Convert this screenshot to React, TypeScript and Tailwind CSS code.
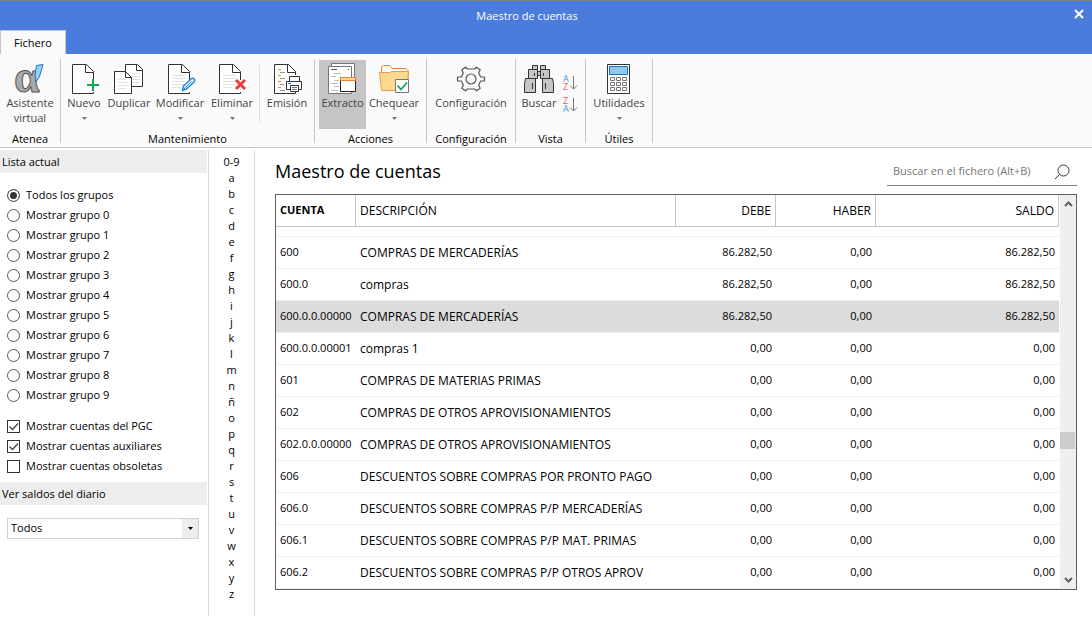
import { useState } from 'react';
import type { ReactNode } from 'react';

const LETTERS = ['0-9', ...'abcdefghijklmnñopqrstuvwxyz'.split('')];

const GROUPS = ['Todos los grupos', ...Array.from({ length: 10 }, (_, i) => `Mostrar grupo ${i}`)];

const ACCOUNTS = [
  { code: '600', name: 'COMPRAS DE MERCADERÍAS', debit: '86.282,50', credit: '0,00', balance: '86.282,50' },
  { code: '600.0', name: 'compras', debit: '86.282,50', credit: '0,00', balance: '86.282,50' },
  { code: '600.0.0.00000', name: 'COMPRAS DE MERCADERÍAS', debit: '86.282,50', credit: '0,00', balance: '86.282,50' },
  { code: '600.0.0.00001', name: 'compras 1', debit: '0,00', credit: '0,00', balance: '0,00' },
  { code: '601', name: 'COMPRAS DE MATERIAS PRIMAS', debit: '0,00', credit: '0,00', balance: '0,00' },
  { code: '602', name: 'COMPRAS DE OTROS APROVISIONAMIENTOS', debit: '0,00', credit: '0,00', balance: '0,00' },
  { code: '602.0.0.00000', name: 'COMPRAS DE OTROS APROVISIONAMIENTOS', debit: '0,00', credit: '0,00', balance: '0,00' },
  { code: '606', name: 'DESCUENTOS SOBRE COMPRAS POR PRONTO PAGO', debit: '0,00', credit: '0,00', balance: '0,00' },
  { code: '606.0', name: 'DESCUENTOS SOBRE COMPRAS P/P MERCADERÍAS', debit: '0,00', credit: '0,00', balance: '0,00' },
  { code: '606.1', name: 'DESCUENTOS SOBRE COMPRAS P/P MAT. PRIMAS', debit: '0,00', credit: '0,00', balance: '0,00' },
  { code: '606.2', name: 'DESCUENTOS SOBRE COMPRAS P/P OTROS APROV', debit: '0,00', credit: '0,00', balance: '0,00' },
];

// Icons
function Icon({ children }: { children: ReactNode }) {
  return (
    <svg viewBox="0 0 32 32" className="size-8 shrink-0 overflow-visible" fill="none" aria-hidden="true">
      {children}
    </svg>
  );
}

function Page({ x = 4, lines = false }: { x?: number; lines?: boolean }) {
  return (
    <g transform={`translate(${x} 0)`}>
      <path d="M.5 1.5h14l7 7v22H.5z" fill="#fff" />
      <path d="M21.5 17V8.5l-7-7H.5v29h21V29" stroke="#333" />
      <path d="M13.5 1.5v8h8" stroke="#333" />
      {lines && <path d="M4 12.5h13M4 15.5h13M4 18.5h13M4 21.5h12M4 24.5h9" stroke="#e2e2e2" />}
    </g>
  );
}

function AssistantIcon() {
  return (
    <Icon>
      <text x="0" y="29" fontSize="46" fontWeight="bold" fontFamily="Liberation Serif, serif" fill="#a9a9a9" stroke="#555" strokeWidth="1">
        α
      </text>
      <path d="M22.500 2.500l6.500-1-3.500 12-3.500 5.500-1-7z" fill="#9bd0f5" stroke="#1d72b8" />
    </Icon>
  );
}

function NewIcon() {
  return (
    <Icon>
      <Page />
      <path d="M25 16v12M19 22h12" stroke="#fafafa" strokeWidth="4" />
      <path d="M25 16v12M19 22h12" stroke="#13a650" strokeWidth="2" />
    </Icon>
  );
}

function DuplicateIcon() {
  return (
    <Icon>
      <path d="M12.500 1.500h12l5 5v17h-17z" fill="#fff" stroke="#333" />
      <path d="M23.500 1.500v6h6" stroke="#333" />
      <path d="M19 10.500h8M19 13.500h8M20 16.500h7M20 19.500h7" stroke="#e2e2e2" />
      <path d="M1.500 8.500h11l6 6v16h-17z" fill="#fff" stroke="#333" />
      <path d="M12.500 8.500v6h6" stroke="#333" />
      <path d="M5 16.500h8M5 19.500h10M5 22.500h10M5 25.500h8" stroke="#e2e2e2" />
    </Icon>
  );
}

function EditIcon() {
  return (
    <Icon>
      <Page lines />
      <path d="M18.500 27.500l1-4.500 8-7.500c2-1 4 1 3 3l-8 7.500z" fill="#eaf5fd" stroke="#2a8fd6" strokeWidth="1.500" />
      <path d="M20 26l7.500-7.500" stroke="#2a8fd6" />
    </Icon>
  );
}

function DeleteIcon() {
  return (
    <Icon>
      <Page x={3} lines />
      <path d="M20 17l9 9M29 17l-9 9" stroke="#ee3b3b" strokeWidth="3" />
    </Icon>
  );
}

function PrintIcon() {
  return (
    <Icon>
      <Page x={3} />
      <path d="M7 6.500h3M7 12.500h3M7 18.500h3M7 24.500h3" stroke="#e8952a" />
      <path d="M9 9.500h5M9 15.500h5M9 21.500h4M9 27.500h5" stroke="#999" />
      <path d="M15 12h17v17H15z" fill="#fafafa" />
      <path d="M18.500 18.500v-5h10v5" fill="#fff" stroke="#333" />
      <path d="M19.500 26.500h-4v-8h15v8h-4" fill="#fff" stroke="#333" />
      <path d="M19.500 22.500h8v6h-8z" fill="#fff" stroke="#333" />
      <path d="M21 24.500h5M21 26.500h5" stroke="#777" />
      <path d="M17 20.500h3" stroke="#2a8fd6" />
    </Icon>
  );
}

function StatementIcon() {
  return (
    <Icon>
      <path d="M4.500.500h23v26h-23z" fill="#fff" stroke="#777" />
      <path d="M1.500 3.500h23v27h-23z" fill="#fff" stroke="#777" />
      <path d="M4 6.500h6M21 6.500h1" stroke="#555" />
      <path d="M7 10.500h7M4 13.500h5M7 17.500h5M4 20.500h7M7 23.500h5M4 27.500h7" stroke="#bbb" />
      <path d="M13.500 14.500h15v14h-15z" fill="#fff" stroke="#222" />
      <path d="M13.500 14.500h15v3h-15z" fill="#fcd98c" stroke="#e8862d" />
    </Icon>
  );
}

function CheckIcon() {
  return (
    <Icon>
      <path d="M3.500 9V4l2-1.500h6l2.500 3h14l2 2V20h-26z" fill="#fff" stroke="#ed7d31" />
      <path d="M1.500 9.500h10l2-1h17l-2 19h-25z" fill="#fbd98e" stroke="#ed9a4c" />
      <path d="M17.500 16.500h13v13h-13z" fill="#fff" stroke="#777" />
      <path d="M19.500 22.500l3.500 4 6-7" stroke="#13a650" strokeWidth="1.800" />
    </Icon>
  );
}

function GearIcon() {
  return (
    <Icon>
      <path
        d="M2.500 14h3.800l2-4-1.500-3.200 3.700-2.600 2 1.800h7l2-1.800 3.700 2.600-1.500 3.200 2 4h3.800v4h-3.800l-2 4 1.500 3.200-3.700 2.600-2-1.800h-7l-2 1.800-3.700-2.600 1.500-3.200-2-4H2.500z"
        stroke="#555"
        strokeWidth="1.200"
        strokeLinejoin="round"
      />
      <circle cx="16" cy="16" r="5" stroke="#555" strokeWidth="1.200" />
    </Icon>
  );
}

function BinocularsIcon() {
  return (
    <Icon>
      <g fill="#c8c6c4" stroke="#333">
        <path d="M9.500 2.500h5v4h-5zM17.500 2.500h5v4h-5z" />
        <path d="M13.500 8.500h5v4h-5z" />
        <path d="M5.500 6.500h9v9h-9zM17.500 6.500h9v9h-9z" />
        <path d="M2.500 15.500h10v14h-11v-9zM19.500 15.500h10l1 5v9h-11z" />
        <path d="M11.500 10v3M20.500 10v3M9.500 20v6M22.500 20v6" />
      </g>
    </Icon>
  );
}

function CalculatorIcon() {
  return (
    <Icon>
      <path d="M4.500 1.500h22v29h-22z" fill="#fff" stroke="#333" />
      <path d="M6.500 3.500h18v8h-18z" fill="#90c8f0" stroke="#1d72b8" />
      <path
        d="M7.500 14.500h4v3h-4zM13.500 14.500h4v3h-4zM19.500 14.500h4v3h-4zM7.500 19.500h4v3h-4zM13.500 19.500h4v3h-4zM19.500 19.500h4v3h-4zM7.500 24.500h4v3h-4zM13.500 24.500h4v3h-4zM19.500 24.500h4v3h-4z"
        fill="#fff"
        stroke="#777"
      />
    </Icon>
  );
}

function SortIcon({ reverse = false }: { reverse?: boolean }) {
  const top = reverse ? 'Z' : 'A';
  const bottom = reverse ? 'A' : 'Z';
  return (
    <svg viewBox="0 0 16 18" className="h-[18px] w-4 overflow-visible" fill="none" aria-hidden="true">
      <text x="1" y="8" fontSize="9" fontFamily="Open Sans, sans-serif" fill={reverse ? '#ef5b5b' : '#3d9bdc'}>
        {top}
      </text>
      <text x="1" y="16" fontSize="9" fontFamily="Open Sans, sans-serif" fill={reverse ? '#3d9bdc' : '#ef5b5b'}>
        {bottom}
      </text>
      <path d="M11.500 2v13M8 11.500l3.500 3.500 3.500-3.500" stroke="#777" />
    </svg>
  );
}

function Caret({ className }: { className: string }) {
  return (
    <svg viewBox="0 0 5 3" className={`h-[3px] w-[5px] ${className}`} fill="currentColor" aria-hidden="true">
      <path d="M0 0h5L2.500 3z" />
    </svg>
  );
}

// Ribbon
function RibbonGroup({ title, children }: { title: string; children: ReactNode }) {
  return (
    <section className="flex h-21 flex-col border-r border-[#c6c6c6]">
      <div className="flex h-[72px] shrink-0 pt-px">{children}</div>
      <h2 className="text-center leading-4">{title}</h2>
    </section>
  );
}

interface RibbonButtonProps {
  label: string;
  icon: ReactNode;
  width: string;
  menu?: boolean;
  active?: boolean;
}

function RibbonButton({ label, icon, width, menu, active }: RibbonButtonProps) {
  return (
    <button
      type="button"
      className={`flex h-[69px] flex-col items-center pt-[3px] text-[#444] ${width} ${active ? 'bg-[#c5c5c5]' : ''}`}
    >
      {icon}
      <span className="leading-[15px]">{label}</span>
      {menu && <Caret className="mt-[7px] text-[#777]" />}
    </button>
  );
}

function Checkbox({ label, checked }: { label: string; checked?: boolean }) {
  return (
    <label className="flex h-5 items-center gap-1.5">
      <span className="grid">
        <input
          type="checkbox"
          defaultChecked={checked}
          className="peer col-start-1 row-start-1 size-[13px] appearance-none border border-[#333]"
        />
        <svg
          viewBox="0 0 13 13"
          className="pointer-events-none invisible col-start-1 row-start-1 size-[13px] peer-checked:visible"
          fill="none"
          aria-hidden="true"
        >
          <path d="M2.500 6.500l3 3 5.500-6" stroke="#444" strokeWidth="1.300" />
        </svg>
      </span>
      {label}
    </label>
  );
}

function Sidebar() {
  const [group, setGroup] = useState(GROUPS[0]);

  return (
    <aside className="w-[209px] shrink-0 border-r border-[#d9d9d9]">
      <h2 className="mr-px bg-[#ededed] pl-0.5 leading-[23px]">Lista actual</h2>
      <div className="px-[7px] pt-3 pb-1.5">
        {GROUPS.map((name) => (
          <label key={name} className="flex h-5 items-center gap-1.5">
            <input
              type="radio"
              name="group"
              checked={group === name}
              onChange={() => setGroup(name)}
              className="size-[13px] appearance-none rounded-full border border-[#555] checked:bg-[#333] checked:shadow-[inset_0_0_0_2px_white]"
            />
            {name}
          </label>
        ))}
        <div className="mt-[11px]">
          <Checkbox label="Mostrar cuentas del PGC" checked />
          <Checkbox label="Mostrar cuentas auxiliares" checked />
          <Checkbox label="Mostrar cuentas obsoletas" />
        </div>
      </div>
      <h2 className="mr-px bg-[#ededed] pl-0.5 leading-[23px]">
        <label htmlFor="journal">Ver saldos del diario</label>
      </h2>
      <div className="mx-[7px] mt-[13px] grid w-48 items-center border border-[#d0d0d0]">
        <select id="journal" className="col-start-1 row-start-1 h-[19px] appearance-none bg-white pl-[3px]">
          <option>Todos</option>
        </select>
        <span className="pointer-events-none col-start-1 row-start-1 flex h-[19px] w-4 items-center justify-center justify-self-end bg-[#ededed]">
          <Caret className="text-black" />
        </span>
      </div>
    </aside>
  );
}

function ScrollBar() {
  return (
    <div className="ml-px flex w-4 shrink-0 flex-col items-center justify-between bg-[#efefef]">
      <button type="button" aria-label="Subir" className="flex h-[18px] items-center">
        <svg viewBox="0 0 9 6" className="h-1.5 w-[9px]" fill="none">
          <path d="M1 5l3.500-3.500L8 5" stroke="#606060" strokeWidth="2" />
        </svg>
      </button>
      <div className="flex w-full flex-1 flex-col">
        <div className="grow-[219]" />
        <div className="mr-px h-[17px] bg-[#cdcdcd]" />
        <div className="grow-[122]" />
      </div>
      <button type="button" aria-label="Bajar" className="flex h-[18px] items-center">
        <svg viewBox="0 0 9 6" className="h-1.5 w-[9px]" fill="none">
          <path d="M1 1l3.500 3.500L8 1" stroke="#606060" strokeWidth="2" />
        </svg>
      </button>
    </div>
  );
}

function AccountsTable() {
  const [selected, setSelected] = useState('600.0.0.00000');

  return (
    <div className="flex border border-[#606060]">
      <table className="w-full table-fixed border-separate border-spacing-0">
        <colgroup>
          <col className="w-20" />
          <col className="w-80" />
          <col className="w-[100px]" />
          <col className="w-[100px]" />
          <col />
        </colgroup>
        <thead className="text-xs">
          <tr className="h-8 *:border-r *:border-b *:border-[#c6c6c6] *:px-1">
            <th className="text-left text-[11px] font-bold">CUENTA</th>
            <th className="text-left font-normal">DESCRIPCIÓN</th>
            <th className="text-right font-normal">DEBE</th>
            <th className="text-right font-normal">HABER</th>
            <th className="text-right font-normal">SALDO</th>
          </tr>
        </thead>
        <tbody>
          <tr className="h-2.5">
            <td colSpan={5} className="border-b border-[#ededed]" />
          </tr>
          {ACCOUNTS.map((account) => (
            <tr
              key={account.code}
              onClick={() => setSelected(account.code)}
              className={`h-8 whitespace-nowrap *:border-b *:border-[#ededed] *:px-1 ${
                selected === account.code ? 'bg-[#dcdcdc]' : ''
              }`}
            >
              <td>{account.code}</td>
              <td className="text-xs">{account.name}</td>
              <td className="text-right">{account.debit}</td>
              <td className="text-right">{account.credit}</td>
              <td className="text-right">{account.balance}</td>
            </tr>
          ))}
        </tbody>
      </table>
      <ScrollBar />
    </div>
  );
}

export default function App() {
  return (
    <div className="min-h-screen bg-white font-['Open_Sans','Noto_Sans',sans-serif] text-[11px] text-black">
      {/* Title bar */}
      <header className="border-t border-[#808080] bg-[#4b7bdb]">
        <div className="flex h-[29px] items-center text-white">
          <h1 className="flex-1 pt-0.5 text-center">Maestro de cuentas</h1>
          <button type="button" aria-label="Cerrar" className="flex w-[38px] justify-center pb-1 pl-3">
            <svg viewBox="0 0 10 10" className="size-2.5" fill="none">
              <path d="M1 1l8 8M9 1L1 9" stroke="#fff" strokeWidth="2" />
            </svg>
          </button>
        </div>
        <button type="button" className="block h-6 w-[66px] border-x border-t border-[#c6c6c6] bg-[#fafafa] pt-0.5">
          Fichero
        </button>
      </header>

      {/* Ribbon */}
      <div className="flex border-b border-[#c6c6c6] bg-[#fafafa] pt-[5px] pb-1">
        <RibbonGroup title="Atenea">
          <button type="button" className="flex w-[60px] flex-col items-center pt-[3px] text-[#444]">
            <AssistantIcon />
            <span className="leading-[15px]">Asistente virtual</span>
          </button>
        </RibbonGroup>
        <RibbonGroup title="Mantenimiento">
          <RibbonButton label="Nuevo" icon={<NewIcon />} width="w-[46px]" menu />
          <RibbonButton label="Duplicar" icon={<DuplicateIcon />} width="w-11" />
          <RibbonButton label="Modificar" icon={<EditIcon />} width="w-[58px]" menu />
          <RibbonButton label="Eliminar" icon={<DeleteIcon />} width="w-[46px]" menu />
          <div className="mt-[5px] ml-1 h-[58px] w-px bg-[#dedede]" />
          <RibbonButton label="Emisión" icon={<PrintIcon />} width="w-[54px]" />
        </RibbonGroup>
        <RibbonGroup title="Acciones">
          <div className="flex px-1">
            <RibbonButton label="Extracto" icon={<StatementIcon />} width="w-[47px]" active />
            <RibbonButton label="Chequear" icon={<CheckIcon />} width="w-14" menu />
          </div>
        </RibbonGroup>
        <RibbonGroup title="Configuración">
          <RibbonButton label="Configuración" icon={<GearIcon />} width="w-[88px]" />
        </RibbonGroup>
        <RibbonGroup title="Vista">
          <RibbonButton label="Buscar" icon={<BinocularsIcon />} width="w-[46px]" />
          <div className="flex w-[23px] flex-col gap-1 pt-3.5">
            <button type="button" aria-label="Orden ascendente">
              <SortIcon />
            </button>
            <button type="button" aria-label="Orden descendente">
              <SortIcon reverse />
            </button>
          </div>
        </RibbonGroup>
        <RibbonGroup title="Útiles">
          <RibbonButton label="Utilidades" icon={<CalculatorIcon />} width="w-[66px]" menu />
        </RibbonGroup>
      </div>

      {/* Content */}
      <div className="flex pt-0.5">
        <Sidebar />
        <nav className="flex w-[46px] shrink-0 flex-col items-center border-r border-[#d9d9d9] pt-1 pb-3.5">
          {LETTERS.map((letter) => (
            <a key={letter} href="#" className="leading-4">
              {letter}
            </a>
          ))}
        </nav>
        <main className="min-w-0 flex-1 pr-[15px] pl-5">
          <div className="mb-2 flex items-start justify-between">
            <h2 className="pt-[7px] pb-px text-lg leading-7">Maestro de cuentas</h2>
            <div className="flex h-9 w-[190px] items-center border-b border-[#808080] pt-2 pr-1.5 pl-1.5">
              <input
                type="text"
                aria-label="Buscar en el fichero"
                placeholder="Buscar en el fichero (Alt+B)"
                className="min-w-0 flex-1 outline-none placeholder:text-[#767676]"
              />
              <button type="button" aria-label="Buscar">
                <svg viewBox="0 0 18 16" className="h-4 w-[18px]" fill="none">
                  <circle cx="10.500" cy="6.500" r="5.500" stroke="#333" />
                  <path d="M6.500 10.500L2 15" stroke="#333" />
                </svg>
              </button>
            </div>
          </div>
          <AccountsTable />
        </main>
      </div>
    </div>
  );
}
